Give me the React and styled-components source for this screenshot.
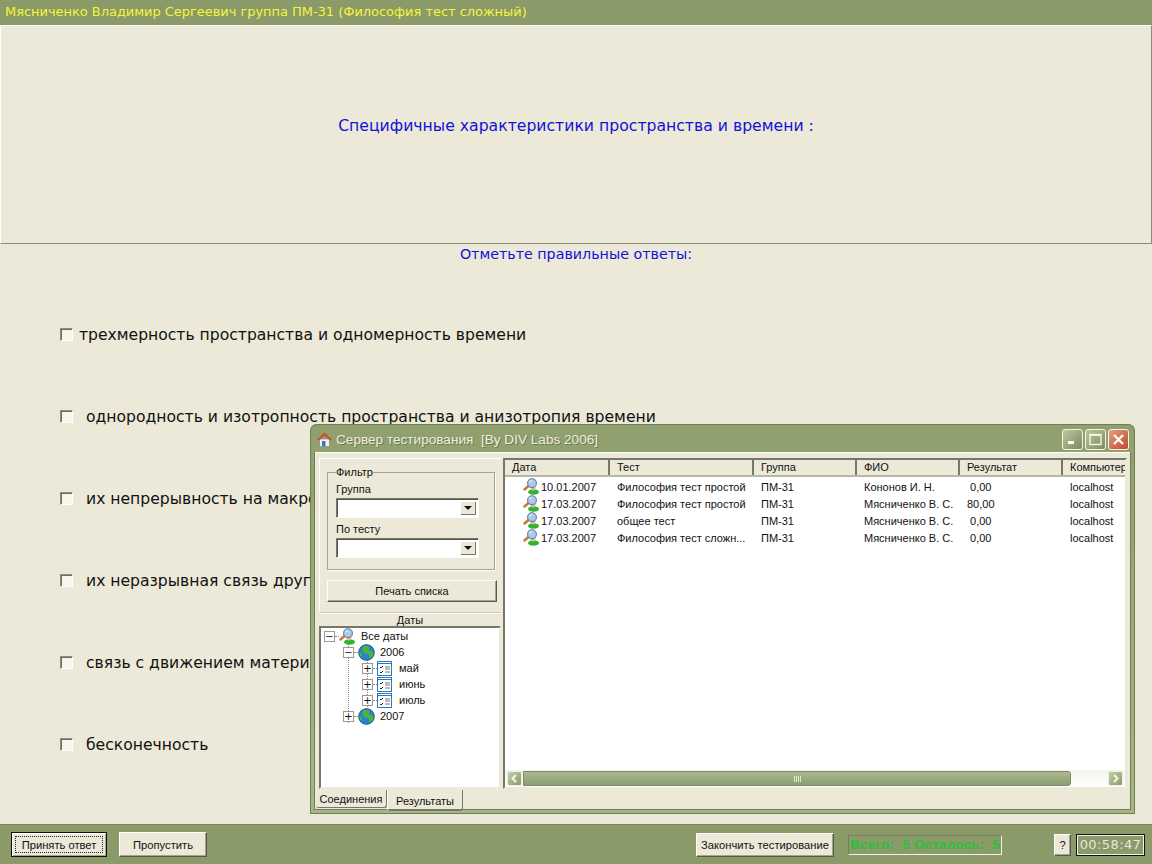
import React from 'react';
import styled, { createGlobalStyle } from 'styled-components';

const GlobalStyle = createGlobalStyle`
  html, body { margin: 0; padding: 0; background: #ece9d8; }
  * { box-sizing: border-box; }
`;

const olive = '#8a9a68';
const face = '#ece9d8';
const tahoma = '"Liberation Sans", Arial, sans-serif';
const verdana = '"DejaVu Sans", Verdana, sans-serif';

const Page = styled.div`
  position: relative;
  width: 1152px;
  height: 864px;
  display: flex;
  flex-direction: column;
  overflow: hidden;
  background: ${face};
  font-family: ${verdana};
`;

const TopBar = styled.div`
  height: 25px;
  flex: none;
  padding: 4px 0 0 5px;
  background: ${olive};
  color: #f5f53c;
  font-size: 12.95px;
  line-height: 16px;
  white-space: nowrap;
`;

const QuestionPanel = styled.div`
  height: 219px;
  flex: none;
  display: flex;
  align-items: center;
  justify-content: center;
  padding-bottom: 19px;
  border: 1px solid;
  border-color: #fff #8c8c7c #8c8c7c #fff;
  color: #1212d8;
  font-size: 15.66px;
`;

const Prompt = styled.div`
  height: 20px;
  flex: none;
  text-align: center;
  color: #1212d8;
  font-size: 14.27px;
  line-height: 20px;
`;

const Options = styled.div`
  flex: 1;
  display: flex;
  flex-direction: column;
  gap: 60px;
  padding: 60px 0 0 60px;
`;

const Option = styled.div`
  height: 22px;
  display: flex;
  align-items: center;
  font-size: 15.6px;
  color: #111;
  white-space: nowrap;
`;

const Check = styled.span`
  width: 13px;
  height: 13px;
  flex: none;
  margin-right: ${p => p.$gap}px;
  margin-bottom: 2px;
  background: #f7f5ec;
  border: 1px solid;
  border-color: #8d8b80 #fff #fff #8d8b80;
  box-shadow: inset 1px 1px 0 #6f6e64;
`;

const BottomBar = styled.div`
  height: 40px;
  flex: none;
  display: flex;
  align-items: center;
  padding: 0 7px 0 11px;
  background: ${olive};
  border-top: 1px solid #77875a;
  font-family: ${tahoma};
`;

const Button = styled.button`
  width: ${p => p.$w}px;
  height: ${p => p.$h || 25}px;
  margin-right: ${p => p.$mr || 0}px;
  margin-left: ${p => p.$ml || 0}px;
  padding: 0;
  flex: none;
  background: ${face};
  color: #111;
  font-family: ${tahoma};
  font-size: 11.2px;
  border: 1px solid;
  border-color: #fff #55594a #55594a #fff;
  box-shadow: inset -1px -1px 0 #a5a491;
`;

const DefaultButton = styled(Button)`
  border: 1px solid #111;
  box-shadow: inset 1px 1px 0 #fff, inset -1px -1px 0 #a5a491;
  position: relative;
  &::after {
    content: '';
    position: absolute;
    inset: 3px;
    border: 1px dotted #222;
  }
`;

const Status = styled.div`
  width: 154px;
  height: 20px;
  flex: none;
  margin-left: 14px;
  padding-left: 1px;
  border: 1px solid;
  border-color: #70805a #f0f0e4 #f0f0e4 #70805a;
  color: #25c438;
  font-size: 13px;
  font-weight: 700;
  letter-spacing: 0.45px;
  line-height: 18px;
  white-space: pre;
  overflow: hidden;
`;

const Clock = styled.div`
  width: 69px;
  height: 22px;
  flex: none;
  margin-left: 5px;
  border: 1px solid #111;
  box-shadow: inset 0 0 0 1px #f0f0e4;
  color: #e8e8dc;
  font-family: ${verdana};
  font-size: 13px;
  letter-spacing: 0.4px;
  line-height: 20px;
  text-align: center;
`;

/* окно сервера лежит поверх теста */
const Window = styled.div`
  position: absolute;
  left: 310px;
  top: 424px;
  width: 825px;
  height: 390px;
  display: flex;
  flex-direction: column;
  padding: 0 4px 4px;
  background: linear-gradient(#8f9f6e, #a7b68a);
  border-radius: 7px 7px 0 0;
  box-shadow: inset 0 0 0 1px #6f7f52;
  font-family: ${tahoma};
  font-size: 11px;
  color: #111;
`;

const TitleBar = styled.div`
  height: 28px;
  flex: none;
  display: flex;
  align-items: center;
  padding: 3px 2px 0 2px;
  gap: 3px;
`;

const TitleText = styled.div`
  flex: 1;
  color: #eeeedd;
  font-size: 13.6px;
  text-shadow: 1px 1px 0 #6c7a4e;
  white-space: pre;
`;

const WinButton = styled.div`
  width: 21px;
  height: 21px;
  margin-left: -1px;
  display: flex;
  align-items: center;
  justify-content: center;
  border: 1px solid #f3f3e6;
  border-radius: 3px;
  background: ${p => (p.$close ? 'linear-gradient(135deg, #e0a080, #c4492c)' : 'linear-gradient(135deg, #bcc8a0, #7c8c5c)')};
`;

const WindowBody = styled.div`
  flex: 1;
  min-height: 0;
  display: flex;
  flex-direction: column;
  background: ${face};
  border: 1px solid #6f7f52;
  border-top: 0;
  box-shadow: inset 0 1px 0 #fff;
`;

const Panes = styled.div`
  height: 337px;
  flex: none;
  display: flex;
  gap: 2px;
  padding: 6px 3px 0 4px;
`;

const LeftPane = styled.div`
  width: 182px;
  flex: none;
  display: flex;
  flex-direction: column;
`;

const FilterArea = styled.div`
  height: 154px;
  flex: none;
  padding: 7px 6px 0 7px;
  border-top: 1px solid #fff;
  border-left: 1px solid #fff;
`;

const FilterBox = styled.fieldset`
  margin: 0;
  height: 104px;
  padding: 0 0 0 8px;
  border: 1px solid;
  border-color: #a5a491;
  box-shadow: 1px 1px 0 #fff;
  legend {
    padding: 0;
    font-size: 11px;
    line-height: 12px;
  }
`;

const FilterLabel = styled.div`
  height: 14px;
  line-height: 14px;
  margin-top: ${p => p.$mt}px;
`;

const Combo = styled.div`
  width: 143px;
  height: 20px;
  margin-top: 2px;
  display: flex;
  justify-content: flex-end;
  padding: 2px;
  background: #fff;
  border: 1px solid;
  border-color: #77766a #fff #fff #77766a;
  box-shadow: inset 1px 1px 0 #55554c;
`;

const ComboArrow = styled.div`
  width: 16px;
  display: flex;
  align-items: center;
  justify-content: center;
  background: ${face};
  box-shadow: inset 1px 1px 0 #fff, inset -1px -1px 0 #77766a;
  &::after {
    content: '';
    border: 4px solid transparent;
    border-top: 4px solid #111;
    border-bottom: 0;
  }
`;

const PrintButton = styled(Button)`
  display: block;
  margin-top: 10px;
  font-size: 11px;
`;

const DatesHeader = styled.div`
  height: 14px;
  flex: none;
  text-align: center;
  line-height: 15px;
  border-top: 1px solid #c9c7b4;
  box-shadow: inset 0 1px 0 #fff;
`;

const Tree = styled.div`
  flex: 1;
  min-height: 0;
  padding: 0 0 0 3px;
  background: #fff;
  border: 2px solid;
  border-color: #77766a #ece9d8 #ece9d8 #77766a;
`;

const TreeRow = styled.div`
  height: 16px;
  display: flex;
  align-items: center;
  padding-left: ${p => p.$level * 19}px;
  white-space: nowrap;
  background-image: ${p => (p.$guides || []).map(() => 'repeating-linear-gradient(#888 0 1px, transparent 1px 2px)').join(',') || 'none'};
  background-size: 1px 100%;
  background-repeat: no-repeat;
  background-position: ${p => (p.$guides || []).map(x => `${x}px 0`).join(',') || '0 0'};
`;

const ExpandBox = styled.div`
  width: 11px;
  height: 11px;
  flex: none;
  display: flex;
  align-items: center;
  justify-content: center;
  border: 1px solid #9c9b8e;
  background: #fff;
  font-family: ${verdana};
  font-size: 10px;
  line-height: 9px;
`;

const Connector = styled.div`
  width: 4px;
  flex: none;
  border-bottom: 1px dotted #888;
`;

const TreeLabel = styled.span`
  margin-left: ${p => p.$ml || 5}px;
`;

const ListPane = styled.div`
  flex: 1;
  min-width: 0;
  display: flex;
  flex-direction: column;
  background: #fff;
  border: 2px solid;
  border-color: #77766a #ece9d8 #ece9d8 #77766a;
`;

const HeaderRow = styled.div`
  height: 17px;
  flex: none;
  display: flex;
  background: ${face};
  border-bottom: 2px solid #b9b7a4;
  overflow: hidden;
`;

const HeaderCell = styled.div`
  width: ${p => p.$w}px;
  flex: none;
  padding-left: 7px;
  line-height: 15px;
  border-right: 2px solid #77766a;
  white-space: nowrap;
  &:last-child { border-right: 0; }
`;

const Rows = styled.div`
  flex: 1;
  padding-top: 1px;
`;

const Row = styled.div`
  height: 17px;
  display: flex;
  align-items: center;
`;

const Cell = styled.div`
  width: ${p => p.$w}px;
  flex: none;
  padding-left: ${p => p.$pl ?? 7}px;
  display: flex;
  align-items: center;
  gap: 1px;
  white-space: pre;
  overflow: hidden;
`;

const Scrollbar = styled.div`
  height: 17px;
  flex: none;
  display: flex;
  align-items: center;
  padding: 0 2px;
  background: linear-gradient(#f4f3ea, #fff);
`;

const ScrollButton = styled.div`
  width: 15px;
  height: 15px;
  flex: none;
  display: flex;
  align-items: center;
  justify-content: center;
  border: 1px solid #f0f0e4;
  border-radius: 2px;
  background: linear-gradient(135deg, #c2cda8, #8c9c6c);
`;

const ScrollThumb = styled.div`
  width: 548px;
  height: 15px;
  margin-left: 1px;
  margin-right: auto;
  flex: none;
  display: flex;
  align-items: center;
  justify-content: center;
  border: 1px solid #7c8a60;
  border-radius: 0 3px 3px 0;
  background: linear-gradient(#a9b890, #8e9e72);
  box-shadow: 0 1px 0 #fff;
`;

const Grip = styled.div`
  width: 7px;
  height: 6px;
  background: repeating-linear-gradient(90deg, #e2e8d2 0 1px, transparent 1px 2px);
`;

const Tabs = styled.div`
  flex: 1;
  display: flex;
  align-items: flex-start;
  padding: 1px 0 0 1px;
`;

const Tab = styled.div`
  height: ${p => (p.$active ? 21 : 18)}px;
  width: ${p => p.$w}px;
  flex: none;
  text-align: center;
  line-height: ${p => (p.$active ? 22 : 19)}px;
  border-bottom: 1px solid #77766a;
  border-right: 1px solid #77766a;
  border-left: ${p => (p.$active ? '1px solid #fff' : '0')};
  border-radius: 0 0 3px 3px;
  box-shadow: ${p => (p.$active ? 'inset 0 1px 0 ' + face : '1px 0 0 #a5a491')};
  white-space: nowrap;
`;

const UserIcon = () => (
  <svg width="17" height="17" viewBox="0 0 17 17">
    <ellipse cx="10.5" cy="14" rx="5.5" ry="2.8" fill="#2fb52c" />
    <circle cx="10" cy="10" r="2.5" fill="#f0b48a" />
    <path d="M5.5 8 1.5 11.5" stroke="#c9772e" strokeWidth="2.4" strokeLinecap="round" />
    <circle cx="9" cy="5.2" r="4.4" fill="#a9cbe9" stroke="#5f7fa5" strokeWidth="1.1" />
    <path d="M6.5 4.5a3 3 0 0 1 2.5-2" stroke="#fff" fill="none" />
  </svg>
);

const GlobeIcon = () => (
  <svg width="17" height="17" viewBox="0 0 17 17">
    <circle cx="8.5" cy="8.5" r="8" fill="#2c83c9" />
    <path d="M6 1.2c2 1 4 .5 5 1.5s-1 3 .5 4 3 .5 4.5 1.500c0 3-2 6-4 7-1-2 0-4-2-5S6 9 5 7 4.500 3 6 1.200Z" fill="#4fb23a" />
    <path d="M1 7c2 1 3 3 3 5l-1 1C1.500 11.500 1 9 1 7Z" fill="#4fb23a" />
    <circle cx="8.5" cy="8.5" r="7.800" fill="none" stroke="#14507f" strokeWidth=".8" />
  </svg>
);

const CheckListIcon = () => (
  <svg width="15" height="15" viewBox="0 0 15 15">
    <rect x=".5" y=".5" width="14" height="14" fill="#fff" stroke="#2a78c0" />
    <path d="M1 2.500h13" stroke="#2a78c0" />
    <path d="M3 6l1 1 2-2M3 11l1 1 2-2" stroke="#222" fill="none" />
    <path d="M8 6h5M8 8h5M8 11h5" stroke="#777" />
  </svg>
);

const HouseIcon = () => (
  <svg width="17" height="17" viewBox="0 0 17 17">
    <path d="M3.500 8v7.500h10V8Z" fill="#f4f1e6" stroke="#7b8aa5" strokeWidth=".7" />
    <path d="M.8 8.800 8.500 1.500l7.700 7.300-2 .6-5.700-5-5.700 5Z" fill="#d8492c" />
    <rect x="6" y="10" width="3.500" height="5.500" fill="#3f78c2" />
  </svg>
);

const ArrowGlyph = ({ dir }) => (
  <svg width="9" height="9" viewBox="0 0 9 9">
    <path d={dir === 'left' ? 'M6 1 2.500 4.500 6 8' : 'M3 1l3.500 3.500L3 8'} fill="none" stroke="#f4f6ea" strokeWidth="2" />
  </svg>
);

const columns = [105, 144, 103, 103, 103, 66];
const headers = ['Дата', 'Тест', 'Группа', 'ФИО', 'Результат', 'Компьютер'];
const results = [
  ['10.01.2007', 'Философия тест простой', 'ПМ-31', 'Кононов И. Н.', ' 0,00', 'localhost'],
  ['17.03.2007', 'Философия тест простой', 'ПМ-31', 'Мясниченко В. С.', '80,00', 'localhost'],
  ['17.03.2007', 'общее тест', 'ПМ-31', 'Мясниченко В. С.', ' 0,00', 'localhost'],
  ['17.03.2007', 'Философия тест сложн...', 'ПМ-31', 'Мясниченко В. С.', ' 0,00', 'localhost'],
];

const answers = [
  { text: 'трехмерность пространства и одномерность времени', gap: 6 },
  { text: 'однородность и изотропность пространства и анизотропия времени', gap: 13 },
  { text: 'их непрерывность на макроуровне', gap: 13 },
  { text: 'их неразрывная связь друг с другом', gap: 13 },
  { text: 'связь с движением материи', gap: 13 },
  { text: 'бесконечность', gap: 13 },
];

const treeItems = [
  { level: 0, sign: '−', icon: <UserIcon />, label: 'Все даты' },
  { level: 1, sign: '−', icon: <GlobeIcon />, label: '2006', guides: [24] },
  { level: 2, sign: '+', icon: <CheckListIcon />, label: 'май', guides: [24, 43], labelGap: 7 },
  { level: 2, sign: '+', icon: <CheckListIcon />, label: 'июнь', guides: [24, 43], labelGap: 7 },
  { level: 2, sign: '+', icon: <CheckListIcon />, label: 'июль', guides: [24, 43], labelGap: 7 },
  { level: 1, sign: '+', icon: <GlobeIcon />, label: '2007', guides: [24] },
];

const App = () => (
  <Page>
    <GlobalStyle />
    <TopBar>Мясниченко Владимир Сергеевич группа ПМ-31 (Философия тест сложный)</TopBar>
    <QuestionPanel>Специфичные характеристики пространства и времени :</QuestionPanel>
    <Prompt>Отметьте правильные ответы:</Prompt>
    <Options>
      {answers.map(a => (
        <Option key={a.text}>
          <Check $gap={a.gap} />
          {a.text}
        </Option>
      ))}
    </Options>
    <BottomBar>
      <DefaultButton $w={96} $mr={12}>Принять ответ</DefaultButton>
      <Button $w={88} $mr={489}>Пропустить</Button>
      <Button $w={138} $h={24}>Закончить тестирование</Button>
      <Status>Всего:  5 Осталось:  5</Status>
      <Button $w={17} $h={22} $ml={52}>?</Button>
      <Clock>00:58:47</Clock>
    </BottomBar>

    <Window>
      <TitleBar>
        <HouseIcon />
        <TitleText>Сервер тестирования  [By DIV Labs 2006]</TitleText>
        <WinButton>
          <svg width="11" height="11" viewBox="0 0 11 11"><rect x="1" y="7" width="6" height="3" fill="#fff" /></svg>
        </WinButton>
        <WinButton>
          <svg width="13" height="13" viewBox="0 0 13 13"><rect x="1" y="1.500" width="11" height="10" fill="none" stroke="#f4f4ea" strokeWidth="1.400" /><rect x="1" y="1" width="11" height="2" fill="#f4f4ea" /></svg>
        </WinButton>
        <WinButton $close>
          <svg width="13" height="13" viewBox="0 0 13 13"><path d="M2 2l9 9M11 2l-9 9" stroke="#fff" strokeWidth="2.200" /></svg>
        </WinButton>
      </TitleBar>
      <WindowBody>
        <Panes>
          <LeftPane>
            <FilterArea>
              <FilterBox>
                <legend>Фильтр</legend>
                <FilterLabel $mt={4}>Группа</FilterLabel>
                <Combo><ComboArrow /></Combo>
                <FilterLabel $mt={4}>По тесту</FilterLabel>
                <Combo><ComboArrow /></Combo>
              </FilterBox>
              <PrintButton $w={170} $h={22}>Печать списка</PrintButton>
            </FilterArea>
            <DatesHeader>Даты</DatesHeader>
            <Tree>
              {treeItems.map(t => (
                <TreeRow key={t.label} $level={t.level} $guides={t.guides}>
                  <ExpandBox>{t.sign}</ExpandBox>
                  <Connector />
                  {t.icon}
                  <TreeLabel $ml={t.labelGap}>{t.label}</TreeLabel>
                </TreeRow>
              ))}
            </Tree>
          </LeftPane>
          <ListPane>
            <HeaderRow>
              {headers.map((h, i) => (
                <HeaderCell key={h} $w={columns[i]}>{h}</HeaderCell>
              ))}
            </HeaderRow>
            <Rows>
              {results.map((r, ri) => (
                <Row key={ri}>
                  {r.map((value, i) => (
                    <Cell key={i} $w={columns[i]} $pl={i === 0 ? 18 : 7}>
                      {i === 0 && <UserIcon />}
                      {value}
                    </Cell>
                  ))}
                </Row>
              ))}
            </Rows>
            <Scrollbar>
              <ScrollButton><ArrowGlyph dir="left" /></ScrollButton>
              <ScrollThumb><Grip /></ScrollThumb>
              <ScrollButton><ArrowGlyph dir="right" /></ScrollButton>
            </Scrollbar>
          </ListPane>
        </Panes>
        <Tabs>
          <Tab $w={71}>Соединения</Tab>
          <Tab $w={76} $active>Результаты</Tab>
        </Tabs>
      </WindowBody>
    </Window>
  </Page>
);

export default App;
